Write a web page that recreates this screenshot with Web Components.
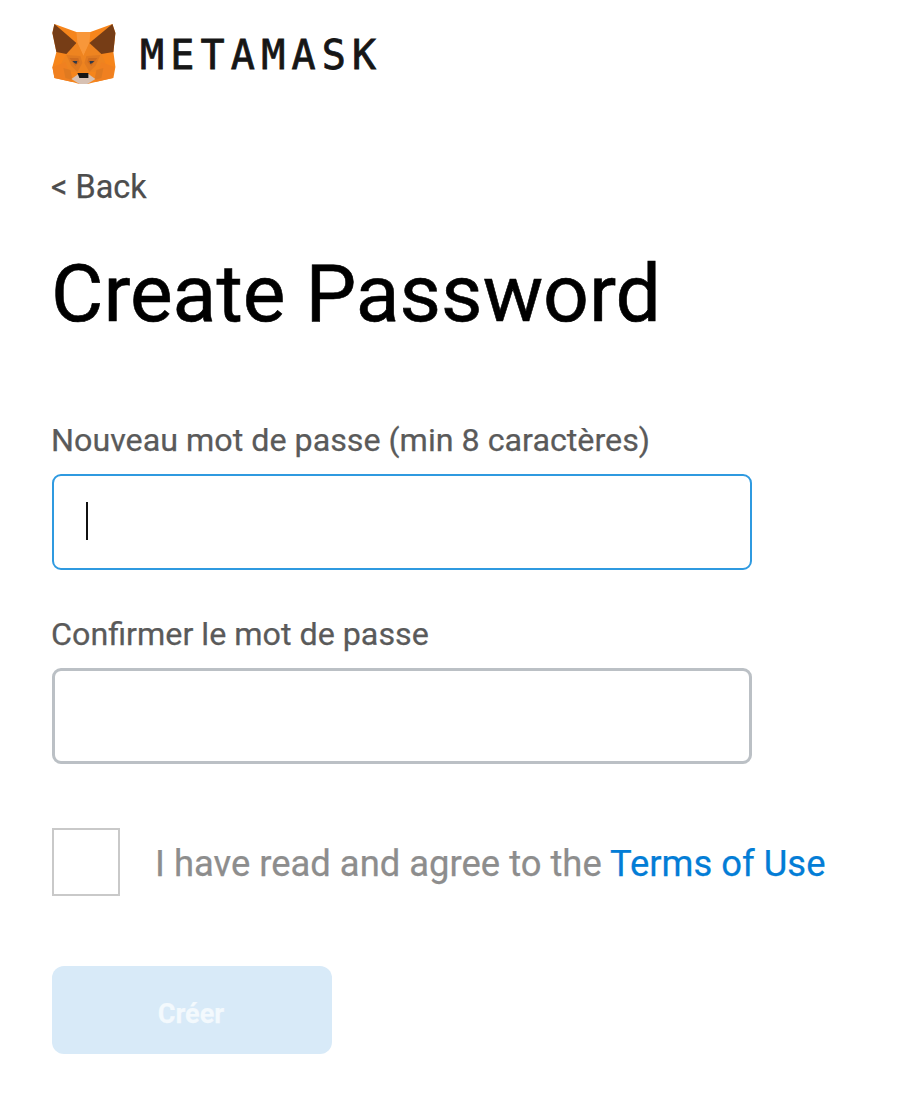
<!doctype html>
<html><head><meta charset="utf-8"><style>
html,body{margin:0;padding:0;background:#fff}
body{font-family:Roboto,"Liberation Sans",sans-serif;-webkit-text-stroke:.25px currentColor}
</style></head><body>
<mm-page></mm-page>
<template id="t-page"><style>
:host{display:flex;flex-direction:column;box-sizing:border-box;width:904px;height:1094px;padding:23px 0 0 52px;overflow:hidden}
.back{font-size:32.4px;line-height:36px;color:#4d4d4d;margin-top:85px;margin-left:-1px}
h1{margin:44px 0 0 -1px;font-weight:400;font-size:80.5px;line-height:90px;color:#000;-webkit-text-stroke:.6px #000}
mm-field.a{margin-top:83px}
mm-field.b{margin-top:46px}
mm-terms{margin-top:64px}
mm-button{margin-top:70px}
</style>
<mm-logo></mm-logo>
<div class="back">&lt; Back</div>
<h1>Create Password</h1>
<mm-field class="a" focused>Nouveau mot de passe (min 8 caractères)</mm-field>
<mm-field class="b">Confirmer le mot de passe</mm-field>
<mm-terms></mm-terms>
<mm-button>Créer</mm-button>
</template>
<template id="t-logo"><style>
:host{display:flex;align-items:center;height:61px}
svg{width:65px;height:61px;flex:none;display:block}
span{font-family:"DejaVu Sans Mono",monospace;font-weight:400;font-size:40px;letter-spacing:6.2px;line-height:61px;color:#161616;margin:0 0 0 23px;padding-top:4px;-webkit-text-stroke:.8px #161616}
</style>
<svg viewBox="52.6 23 65 61">
<polygon points="55,24 77,32 91,32 113,24 116,33 114,52 116,67 114,78 96,82 88,84 80,84 73,82 55,78 53,67 57,52 53,33" fill="#f6851b"/>
<polygon points="77,32 91,32 90,43 84,56 78,43" fill="#f8973a"/>
<polygon points="67,54 78,43 84,56 90,43 102,54 106,63 98,72 90,72 78,72 70,72 62,63" fill="#ee8420"/>
<polygon points="67,55 81,56 83,63 78,72 72,66" fill="#e07a20"/>
<polygon points="101,55 87,56 85,63 90,72 96,66" fill="#e07a20"/>
<polygon points="70,58 79,58 80,62 76,66" fill="#cf6c1e"/>
<polygon points="98,58 89,58 88,62 92,66" fill="#cf6c1e"/>
<polygon points="73,61 78,61 77,64 75,63" fill="#2f3a4a"/>
<polygon points="95,61 90,61 91,64 93,63" fill="#2f3a4a"/>
<polygon points="53,67 66,62 73,82 55,78" fill="#f08020"/>
<polygon points="115,67 102,62 96,82 113,78" fill="#f08020"/>
<polygon points="64,68 71,70 73,80 66,78" fill="#e07a20"/>
<polygon points="104,68 97,70 95,80 102,78" fill="#e07a20"/>
<polygon points="55,24 77,43 67,54 57,52 53,33" fill="#763d16"/>
<polygon points="113,24 90,43 102,54 114,52 116,33" fill="#763d16"/>
<polygon points="72,79 79,74 89,74 96,79 88,84 80,84" fill="#d7c1b3"/>
<polygon points="78,73 89,73 89,78 80,78" fill="#161616"/>
</svg><span>METAMASK</span>
</template>
<template id="t-field"><style>
:host{display:block}
label{display:block;font-size:32.25px;line-height:36px;color:#5a5a5a;margin-left:-1px}
.box{box-sizing:border-box;width:700px;height:96px;margin-top:16px;border:3px solid #bbc0c5;border-radius:9px;background:#fff;display:flex;align-items:center;padding-left:32px}
:host([focused]) .box{border:2px solid #2f9ae0;padding-bottom:2px}
i{display:none;width:2px;height:38px;background:#111}
:host([focused]) i{display:block}
</style><label><slot></slot></label><div class="box"><i></i></div>
</template>
<template id="t-terms"><style>
:host{display:flex;align-items:center}
.c{box-sizing:border-box;width:68px;height:68px;border:2px solid #c9c9c9;flex:none}
p{margin:0 0 0 35px;padding-top:4px;font-size:36.4px;line-height:40px;color:#8d8d8d;white-space:nowrap}
a{color:#037dd6;text-decoration:none}
</style><div class="c"></div><p>I have read and agree to the <a>Terms of Use</a></p>
</template>
<template id="t-btn"><style>
:host{display:flex;box-sizing:border-box;align-items:center;justify-content:center;width:280px;height:88px;padding:8px 2px 0 0;border-radius:12px;background:#d8eaf8;color:#f3f9fd;font-size:27px;font-weight:700}
</style><slot></slot>
</template>
<script>
for(const [n,t] of [['mm-page','t-page'],['mm-logo','t-logo'],['mm-field','t-field'],['mm-terms','t-terms'],['mm-button','t-btn']]){
customElements.define(n,class extends HTMLElement{constructor(){super();this.attachShadow({mode:'open'}).appendChild(document.getElementById(t).content.cloneNode(true));}});
}
</script>
</body></html>
